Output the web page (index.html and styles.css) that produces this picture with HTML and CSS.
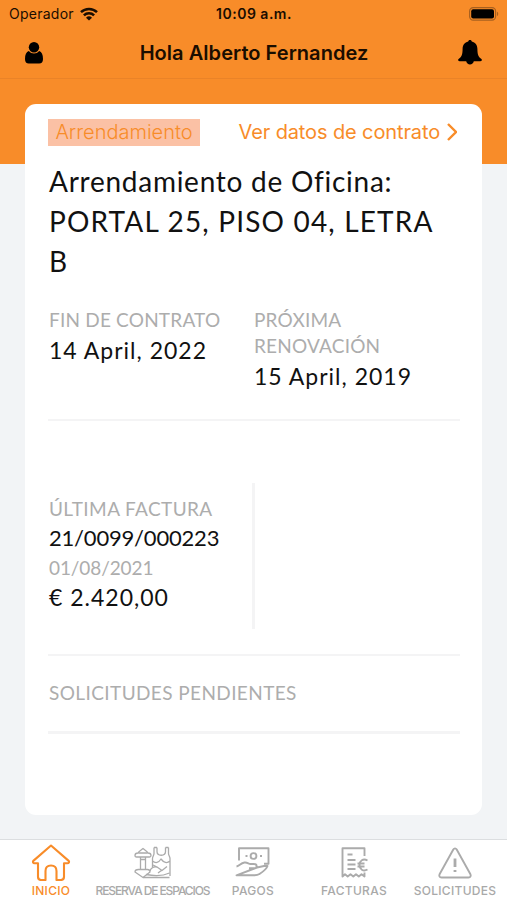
FILE: index.html
```
<!DOCTYPE html>
<html lang="es">
<head>
    <meta charset="UTF-8">
    <meta name="viewport" content="width=device-width, initial-scale=1.0">
    <title>Inicio</title>
    <link rel="stylesheet" href="styles.css">
</head>
<body>
    <div class="app">
        <header class="header">
            <div class="status-bar">
                <div class="carrier">
                    <span class="carrier-name">Operador</span>
                    <svg class="wifi" viewBox="0 0 18 14" fill="none" stroke="#1a0d00" stroke-width="2.5">
                        <path d="M1 5.2a11.4 11.4 0 0 1 16 0"/>
                        <path d="M3.9 8.4a7.2 7.2 0 0 1 10.2 0"/>
                        <path d="M9 13.4L6 10.7a4.3 4.3 0 0 1 6 0z" fill="#1a0d00" stroke="none"/>
                    </svg>
                </div>
                <span class="clock">10:09 a.m.</span>
                <svg class="battery" viewBox="0 0 30 14">
                    <rect x="0.6" y="0.6" width="26" height="12.6" rx="3.6" fill="none" stroke="#a8601f" stroke-width="1.2"/>
                    <rect x="2.2" y="2.2" width="22.8" height="9.4" rx="2" fill="#000"/>
                    <path d="M28 4.8c1.6.5 1.6 3.7 0 4.2z" fill="#a8601f"/>
                </svg>
            </div>
            <div class="nav-bar">
                <svg class="icon-user" viewBox="0 0 18 22">
                    <circle cx="9" cy="5.2" r="5.2"/>
                    <path d="M3.800 9C1.200 9.800 0 12.800 0 17c0 3 1.400 4.600 3.800 4.600h10.400c2.400 0 3.800-1.600 3.800-4.600 0-4.200-1.200-7.200-3.800-8a6.500 6.500 0 0 1-10.400 0z"/>
                </svg>
                <h1>Hola Alberto Fernandez</h1>
                <svg class="icon-bell" viewBox="0 0 24 25">
                    <path d="M12 0c1 0 1.700.6 1.800 1.500 3.500.8 5.600 3.500 5.600 7.300 0 5.700 1 8.200 3.700 9.900 1.300.9.900 2.500-.7 2.500H15.800c-.3 1.900-1.900 3.200-3.800 3.200s-3.500-1.300-3.800-3.200H1.600c-1.600 0-2-1.600-.7-2.500C3.600 17 4.600 14.500 4.600 8.800c0-3.800 2.100-6.500 5.600-7.300C10.300.6 11 0 12 0z"/>
                </svg>
            </div>
        </header>

        <main class="content">
            <section class="card">
                <div class="card-top">
                    <span class="tag">Arrendamiento</span>
                    <a class="link">
                        <span class="link-text">Ver datos de contrato</span>
                        <svg class="chevron" viewBox="0 0 10 18"><path d="M1 1l8 8-8 8"/></svg>
                    </a>
                </div>
                <h2>
                    <span class="line-1">Arrendamiento de Oficina:</span><br>
                    <span class="line-2">PORTAL 25, PISO 04, LETRA</span><br>
                    B
                </h2>
                <div class="dates">
                    <div class="date-col">
                        <p class="label">FIN DE CONTRATO</p>
                        <p class="value">14 April, 2022</p>
                    </div>
                    <div class="date-col">
                        <p class="label">PRÓXIMA<br>RENOVACIÓN</p>
                        <p class="value">15 April, 2019</p>
                    </div>
                </div>
                <div class="invoice">
                    <div class="invoice-data">
                        <p class="label label-wide">ÚLTIMA FACTURA</p>
                        <p class="number">21/0099/000223</p>
                        <p class="label invoice-date">01/08/2021</p>
                        <p class="value amount">€ 2.420,00</p>
                    </div>
                </div>
                <div class="requests">
                    <p class="label label-wide">SOLICITUDES PENDIENTES</p>
                </div>
            </section>
        </main>

        <nav class="tabs">
            <a class="tab active">
                <svg viewBox="0 0 40 38">
                    <path d="M20 2.500L2.600 17.600c-1.200 1.200-.6 2.700 1 2.700H7v13.500c0 2.300.8 3.200 3 3.200h4.500v-9c0-3.600 2-5.500 5.500-5.500s5.500 1.900 5.500 5.500v9H30c2.200 0 3-.9 3-3.200V20.300h3.400c1.600 0 2.200-1.500 1-2.700z"/>
                </svg>
                <span>INICIO</span>
            </a>
            <a class="tab">
                <svg viewBox="0 0 40 38" class="thin">
                    <path d="M3 12.500c0-1.500 1-2.500 3-2.500 1.500-2 3-3 5-4.500 2 1.500 3.500 2.500 5 4.500 2 0 3 1 3 2.500 0 1-.5 1.500-1.500 1.500h-13C3.500 14 3 13.500 3 12.500z"/>
                    <path d="M6.500 10h9M8.500 14v12M13.500 14v12M8.500 16.500h5M3 29c0-1.500 1.500-2.500 3.500-2.500h9c1.500 0 2.500 1 2.500 2.500L11 34.500z"/>
                    <path d="M22 4.500v6c0 2-1.500 3-1.500 5V24M25 4.500v4c0 5 8.500 5 8.500 0v-4M36.500 4.500v6c0 2 1.500 3 1.500 5V33M22 4.500h3M33.500 4.500h3M20.500 18c3 2.500 6 2 8.500-2 3 4 6 4.500 9 2"/>
                    <path d="M11 34.500h26.500M14 31.500c8 1.500 17 1.500 23.500-1.500M18 28c1-3 4-4.500 7-4l5 3.500 5-4M26 30l4-3M21 22l4 2"/>
                </svg>
                <span class="tab-spaces">RESERVA DE ESPACIOS</span>
            </a>
            <a class="tab">
                <svg viewBox="0 0 40 38">
                    <path d="M6 17.500V5.200h29.500v15.600h-4.500"/>
                    <circle cx="20.500" cy="13" r="2.900"/>
                    <path d="M12.500 13h2M27 13h2" />
                    <path d="M3.500 23.500c3-.5 4-3.500 8-4 3-.4 4 1.500 6 1.500h3.500c3.500 0 3.500 4.300 0 4.300h-5M24 24.500l7-1.500h3.500c-1 3-5 6-8 8-1.500 1-3 1.300-5 1.300H3.500z"/>
                </svg>
                <span>PAGOS</span>
            </a>
            <a class="tab">
                <svg viewBox="0 0 40 38">
                    <path d="M30.500 13V5.200H8.500v28.300l2.500-2.300 2.700 2.300 2.800-2.300 2.800 2.300 2.700-2.300 2.800 2.300 2.700-2.300 3 2.300v-4"/>
                    <path d="M13.500 11.500h5M13.500 17h8M13.500 21.500h8M13.500 26h8"/>
                    <path d="M33.500 17.500c-4.500-2.500-8 .5-8 4.500s3.500 7 8 4.500M23.500 20.500h7M23.500 23.500h7"/>
                </svg>
                <span>FACTURAS</span>
            </a>
            <a class="tab">
                <svg viewBox="0 0 40 38">
                    <path d="M18.300 6.500L4.700 31c-1 1.800-.2 3.500 1.800 3.500h27c2 0 2.800-1.700 1.800-3.500L21.700 6.500c-.9-1.500-2.500-1.500-3.400 0z"/>
                    <path d="M20 15.500v8.500M20 27v2" stroke-width="2.800"/>
                </svg>
                <span>SOLICITUDES</span>
            </a>
        </nav>
    </div>
</body>
</html>
```
FILE: styles.css
```
* {
    margin: 0;
    padding: 0;
    box-sizing: border-box;
}

body {
    font-family: Lato, "Open Sans", sans-serif;
    background: #f2f4f6;
    color: #111;
}

.app {
    height: 900px;
    display: flex;
    flex-direction: column;
    overflow: hidden;
}

.header {
    height: 79px;
    background: #f88c29;
    border-bottom: 1px solid #ea8328;
    font-family: Inter, sans-serif;
    color: #1a0d00;
}

.status-bar {
    height: 27px;
    padding: 0 8px 0 9px;
    display: grid;
    grid-template-columns: 1fr auto 1fr;
    align-items: center;
    font-size: 14px;
}

.carrier {
    display: flex;
    align-items: center;
    gap: 6px;
}

.carrier-name {
    letter-spacing: 0.25px;
}

.wifi {
    width: 18px;
    height: 14px;
}

.clock {
    font-weight: 600;
    letter-spacing: 0.5px;
}

.battery {
    width: 30px;
    height: 14px;
    justify-self: end;
}

.nav-bar {
    height: 51px;
    padding: 0 25px;
    display: flex;
    align-items: center;
    justify-content: space-between;
}

.nav-bar h1 {
    margin-left: 7px;
    font-size: 20px;
    font-weight: 600;
    letter-spacing: 0.05px;
    white-space: nowrap;
}

.icon-user {
    width: 18px;
    height: 22px;
}

.icon-bell {
    width: 24px;
    height: 25px;
}

.content {
    flex: 1;
    padding: 25px 25px 0;
    background: linear-gradient(#f88c29 85px, #f2f4f6 85px);
}

.card {
    height: 711px;
    padding: 14px 22px 14px 23px;
    background: #fff;
    border-radius: 11px;
}

.card-top {
    height: 28px;
    display: flex;
    align-items: center;
    justify-content: space-between;
    font-family: Inter, sans-serif;
    font-size: 20px;
    color: #f88c29;
}

.tag {
    width: 152px;
    line-height: 27px;
    text-align: center;
    font-weight: 300;
    background: #fbc1a5;
}

.link {
    display: flex;
    align-items: center;
    gap: 7px;
    padding-right: 3px;
    letter-spacing: -0.12px;
    white-space: nowrap;
}

.chevron {
    width: 10px;
    height: 18px;
    fill: none;
    stroke: #f88c29;
    stroke-width: 2.4;
}

h2 {
    margin: 15px 0 0 1px;
    font-size: 28px;
    font-weight: 400;
    line-height: 40px;
    white-space: nowrap;
}

.line-1 {
    letter-spacing: 0.74px;
}

.line-2 {
    letter-spacing: 1.17px;
}

.dates {
    height: 114px;
    margin-top: 26px;
    display: grid;
    grid-template-columns: 205px 1fr;
    border-bottom: 2px solid #f4f4f5;
}

.date-col,
.invoice-data {
    padding-left: 1px;
}

.label {
    font-size: 19px;
    line-height: 26px;
    letter-spacing: 0.2px;
    color: #adadad;
    white-space: nowrap;
}

.label-wide {
    letter-spacing: 0.4px;
}

.value {
    font-size: 23px;
    line-height: 35px;
    letter-spacing: 1px;
    white-space: nowrap;
}

.invoice {
    height: 235px;
    padding: 62px 0 26px;
    border-bottom: 2px solid #f4f4f5;
}

.invoice-data {
    width: 207px;
    height: 146px;
    padding-top: 13px;
    border-right: 3px solid #f4f4f5;
}

.number {
    font-size: 22px;
    line-height: 32px;
    letter-spacing: -0.2px;
}

.invoice-date {
    line-height: 28px;
    letter-spacing: -0.1px;
}

.amount {
    line-height: 31px;
    letter-spacing: 1px;
}

.requests {
    height: 78px;
    padding: 24px 1px 0;
    border-bottom: 3px solid #f4f4f5;
}

.tabs {
    height: 61px;
    padding-top: 3px;
    display: grid;
    grid-template-columns: repeat(5, 101px);
    background: #fff;
    border-top: 1px solid #dcdee0;
    font-family: Inter, sans-serif;
    font-size: 12px;
    font-weight: 500;
    letter-spacing: 0.3px;
    color: #a9a9a9;
}

.tab {
    display: flex;
    flex-direction: column;
    align-items: center;
    padding-left: 1px;
    line-height: 14px;
    white-space: nowrap;
}

.tab svg {
    width: 40px;
    height: 38px;
    margin-bottom: 3px;
    fill: none;
    stroke: #ababab;
    stroke-width: 1.9;
    stroke-linejoin: round;
}

.tab .thin {
    stroke-width: 1.3;
}

.tab-spaces {
    padding-left: 1px;
    letter-spacing: -1.1px;
}

.tab.active {
    color: #f88c29;
}

.tab.active svg {
    stroke: #f88c29;
    stroke-width: 2.1;
}
```
